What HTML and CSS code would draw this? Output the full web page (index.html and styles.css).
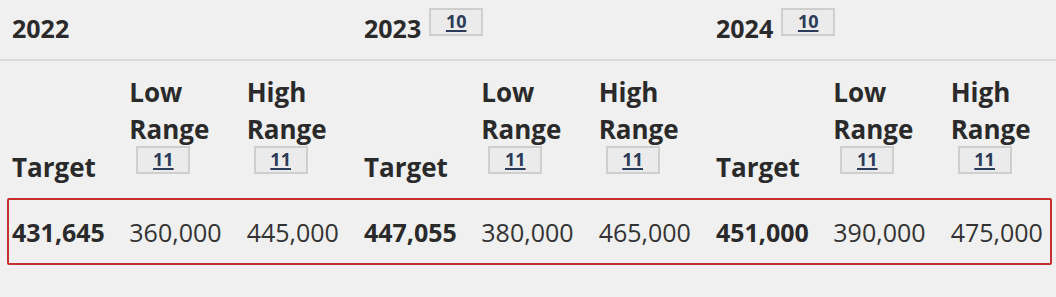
FILE: index.html
```html
<!DOCTYPE html>
<html>
<head>
<meta charset="utf-8">
<link rel="stylesheet" href="styles.css">
</head>
<body>
<div class="years">
  <div class="year"><span class="year-label">2022</span></div>
  <div class="year"><span class="year-label">2023</span><a class="badge badge-year">10</a></div>
  <div class="year"><span class="year-label">2024</span><a class="badge badge-year">10</a></div>
</div>
<div class="subhead">
  <div class="col target">Target</div>
  <div class="col"><div>Low</div><div>Range</div><a class="badge">11</a></div>
  <div class="col"><div>High</div><div>Range</div><a class="badge">11</a></div>
  <div class="col target">Target</div>
  <div class="col"><div>Low</div><div>Range</div><a class="badge">11</a></div>
  <div class="col"><div>High</div><div>Range</div><a class="badge">11</a></div>
  <div class="col target">Target</div>
  <div class="col"><div>Low</div><div>Range</div><a class="badge">11</a></div>
  <div class="col"><div>High</div><div>Range</div><a class="badge">11</a></div>
</div>
<div class="datarow">
  <div class="val strong">431,645</div>
  <div class="val">360,000</div>
  <div class="val">445,000</div>
  <div class="val strong">447,055</div>
  <div class="val">380,000</div>
  <div class="val">465,000</div>
  <div class="val strong">451,000</div>
  <div class="val">390,000</div>
  <div class="val">475,000</div>
</div>
</body>
</html>
```
FILE: styles.css
```css
html, body {
  margin: 0;
  padding: 0;
  background: #f0f0f0;
}
body {
  font-family: "Open Sans", "Noto Sans", sans-serif;
  color: #2a2a2a;
  width: 1056px;
  height: 297px;
  overflow: hidden;
}
.years {
  display: grid;
  grid-template-columns: 352px 352px 352px;
  padding-left: 12px;
  height: 59px;
  border-bottom: 2px solid #dcdcdc;
}
.year {
  display: flex;
  align-items: flex-start;
  gap: 8px;
}
.year-label {
  font-weight: 700;
  font-size: 25px;
  line-height: 32px;
  margin-top: 12px;
}
.badge {
  display: inline-block;
  box-sizing: border-box;
  width: 54px;
  height: 28px;
  border: 2px solid #cfcfcf;
  background: #ebebeb;
  text-align: center;
  font-size: 18px;
  font-weight: 700;
  line-height: 22px;
  color: #2c3b58;
  text-decoration: underline;
  text-decoration-thickness: 2px;
  text-underline-offset: 2px;
}
.badge-year {
  margin-top: 8px;
}
.subhead {
  display: grid;
  grid-template-columns: repeat(9, 117.33px);
  padding-left: 12px;
  padding-bottom: 8px;
  height: 121px;
  box-sizing: border-box;
  align-items: end;
  font-weight: 700;
  font-size: 26px;
  line-height: 37px;
}
.subhead .col {
  display: flex;
  flex-direction: column;
  align-items: flex-start;
}
.subhead .col .badge {
  margin-left: 7px;
  margin-top: -2px;
}
.subhead .target {
  line-height: 32px;
  margin-bottom: -9px;
}
.datarow {
  display: grid;
  grid-template-columns: repeat(9, 117.33px);
  box-sizing: border-box;
  margin-left: 7px;
  width: 1045px;
  height: 67px;
  margin-top: 16px;
  border: 2px solid #c62f2f;
  border-radius: 2px;
  padding-left: 3px;
  align-items: center;
}
.val {
  font-size: 25px;
  color: #333;
  white-space: nowrap;
}
.val.strong {
  font-weight: 700;
  color: #2a2a2a;
}
```
